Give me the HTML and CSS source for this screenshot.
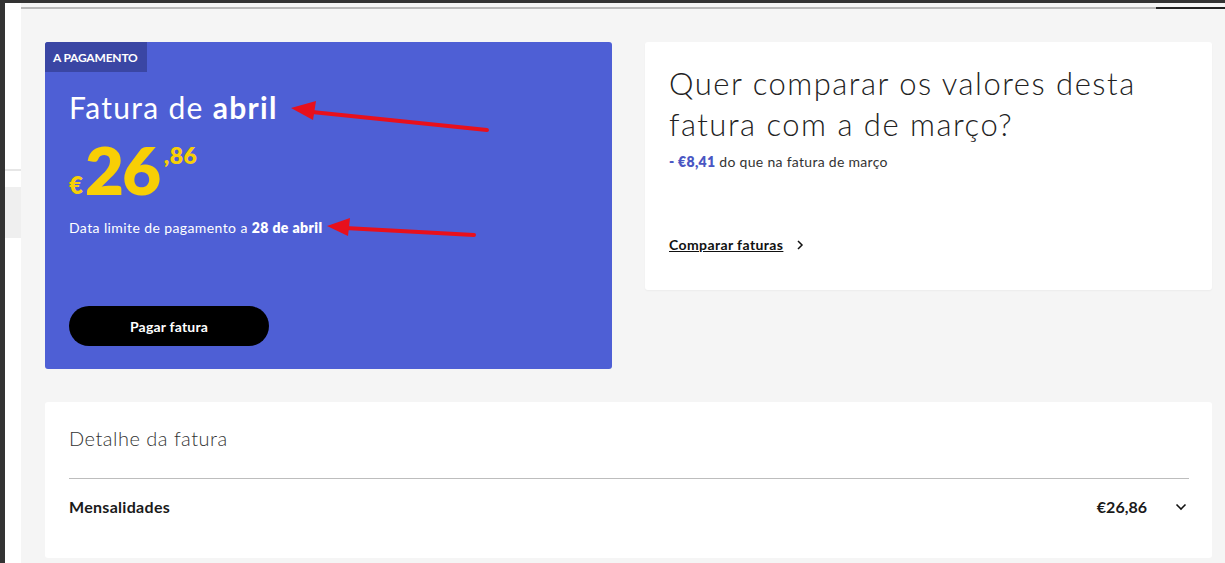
FILE: index.html
```html
<!DOCTYPE html>
<html lang="pt">
<head>
    <meta charset="UTF-8">
    <meta name="viewport" content="width=device-width, initial-scale=1.0">
    <title>Fatura de abril</title>
    <link rel="stylesheet" href="styles.css">
</head>
<body>
    <div class="rail"></div>
    <div class="side">
        <div class="side-line"></div>
        <div class="side-block"></div>
    </div>
    <div class="main">
        <div class="tabs">
            <div class="tab-rest"></div>
            <div class="tab-active"></div>
        </div>

        <div class="cards">
            <div class="bill-card">
                <span class="badge">A PAGAMENTO</span>
                <h1 class="bill-title">Fatura de <strong>abril</strong></h1>
                <div class="amount">
                    <span class="currency">€</span><span class="units">26</span><span class="cents">,86</span>
                </div>
                <p class="due">Data limite de pagamento a <strong>28 de abril</strong></p>
                <button class="pay-btn" type="button">Pagar fatura</button>
            </div>

            <div class="compare-card">
                <h2 class="compare-title">Quer comparar os valores desta fatura com a de março?</h2>
                <p class="diff"><strong>- €8,41</strong> do que na fatura de março</p>
                <a class="compare-link" href="#">
                    <span>Comparar faturas</span>
                    <svg width="8" height="10" viewBox="0 0 8 10"><path d="M2 1l4 4-4 4" fill="none" stroke="#111" stroke-width="1.5"/></svg>
                </a>
            </div>
        </div>

        <div class="detail-card">
            <h3 class="detail-title">Detalhe da fatura</h3>
            <div class="detail-row">
                <span class="row-label">Mensalidades</span>
                <span class="row-value">€26,86</span>
                <svg class="row-chevron" width="12" height="8" viewBox="0 0 12 8"><path d="M1.5 1.5l4.5 4.5 4.5-4.5" fill="none" stroke="#111" stroke-width="1.6"/></svg>
            </div>
        </div>
    </div>

    <!-- annotation arrows drawn over the screenshot -->
    <svg class="marks" width="1225" height="563" viewBox="0 0 1225 563">
        <g stroke="#e8101c" stroke-width="4" stroke-linecap="round" fill="#e8101c">
            <line x1="487" y1="130" x2="312" y2="112"/>
            <polygon points="291,108 316,101 313,120" stroke="none"/>
            <line x1="474" y1="235" x2="345" y2="228"/>
            <polygon points="327,226 350,218 348,236" stroke="none"/>
        </g>
    </svg>
</body>
</html>
```

FILE: styles.css
```css
body {
    margin: 0;
    height: 563px;
    overflow: hidden;
    display: flex;
    font-family: Lato, "Open Sans", sans-serif;
    color: #1a1a1a;
    border-top: 3px solid #333;
    box-sizing: border-box;
    position: relative;
}

.rail {
    width: 5px;
    background-color: #333;
}

.side {
    width: 16px;
    background-color: #fff;
    padding-top: 166px;
}

.side-line {
    height: 2px;
    background-color: #e6e6e6;
}

.side-block {
    margin-top: 16px;
    height: 51px;
    background-color: #efefef;
}

.main {
    flex: 1;
    background-color: #f5f5f5;
}

.tabs {
    display: flex;
    margin-top: 4px;
    height: 2px;
}

.tab-rest {
    flex: 1;
    background-color: #b9b9b9;
}

.tab-active {
    width: 69px;
    background-color: #222;
}

.cards {
    display: grid;
    grid-template-columns: 567px 567px;
    column-gap: 33px;
    align-items: start;
    padding: 33px 0 0 24px;
}

.bill-card {
    background-color: #4e5fd5;
    border-radius: 3px;
    height: 327px;
    box-sizing: border-box;
    color: #fff;
    padding: 0 24px;
    display: flex;
    flex-direction: column;
    align-items: flex-start;
}

.badge {
    margin-left: -24px;
    background-color: #3a46a4;
    font-size: 12px;
    font-weight: 700;
    letter-spacing: -0.2px;
    padding: 8px 9px 7px 8px;
    border-top-left-radius: 3px;
}

.bill-title {
    margin: 17px 0 0 0;
    font-size: 30px;
    font-weight: 400;
    line-height: 36px;
    letter-spacing: 1.3px;
}

.bill-title strong {
    font-weight: 700;
}

.amount {
    display: flex;
    align-items: flex-start;
    color: #f8cf05;
    font-weight: 800;
    margin-top: 14px;
    height: 62px;
}

.currency {
    font-size: 24px;
    align-self: flex-end;
    margin-bottom: 2px;
    margin-right: 2px;
}

.units {
    font-size: 67px;
    line-height: 68px;
    letter-spacing: -1.5px;
    margin-top: -4px;
}

.cents {
    font-size: 23px;
    letter-spacing: 0.5px;
    margin-left: 4px;
    margin-top: 2px;
}

.due {
    margin: 18px 0 0 0;
    font-size: 14px;
    letter-spacing: 0.4px;
}

.due strong {
    font-weight: 800;
}

.pay-btn {
    margin-top: 70px;
    width: 200px;
    height: 40px;
    border: none;
    border-radius: 20px;
    background-color: #000;
    color: #fff;
    font-family: inherit;
    font-size: 14px;
    font-weight: 700;
    letter-spacing: 0.2px;
    cursor: pointer;
}

.compare-card {
    background-color: #fff;
    border-radius: 3px;
    height: 248px;
    box-sizing: border-box;
    padding: 21px 24px 0 24px;
    box-shadow: 0 1px 2px rgba(0, 0, 0, 0.04);
}

.compare-title {
    margin: 0;
    font-size: 31px;
    font-weight: 300;
    line-height: 41px;
    letter-spacing: 1.5px;
    color: #222;
    width: 500px;
}

.diff {
    margin: 8px 0 0 0;
    font-size: 14px;
    letter-spacing: 0.3px;
    color: #333;
}

.diff strong {
    color: #4a56c3;
    font-weight: 800;
}

.compare-link {
    margin-top: 66px;
    display: inline-flex;
    align-items: center;
    gap: 13px;
    color: #111;
    font-size: 14px;
    font-weight: 700;
    letter-spacing: 0.4px;
}

.detail-card {
    margin: 33px 13px 0 24px;
    background-color: #fff;
    border-radius: 3px;
    height: 156px;
    box-sizing: border-box;
    padding: 24px 23px 0 24px;
}

.detail-title {
    margin: 0;
    font-size: 20px;
    font-weight: 300;
    letter-spacing: 0.5px;
    color: #333;
    line-height: 24px;
    padding-bottom: 28px;
    border-bottom: 1px solid #bdbdbd;
}

.detail-row {
    display: flex;
    align-items: center;
    height: 55px;
    font-size: 16px;
    font-weight: 700;
}

.row-label {
    flex: 1;
    letter-spacing: 0.3px;
}

.row-value {
    margin-right: 28px;
    font-size: 16px;
}

.row-chevron {
    margin-right: 2px;
}

.marks {
    position: absolute;
    top: -3px;
    left: 0;
    pointer-events: none;
}
```
